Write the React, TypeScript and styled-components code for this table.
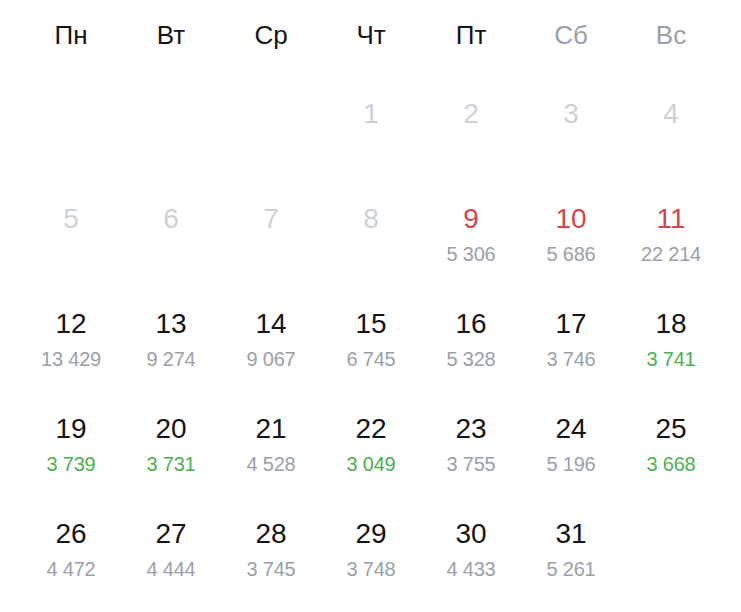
import React from 'react'
import styled, { createGlobalStyle } from 'styled-components'

const GlobalStyle = createGlobalStyle`
    html, body {
        margin: 0;
        padding: 0;
        background: #ffffff;
        font-family: 'Liberation Sans', Arial, sans-serif;
    }
`

type Tone = 'default' | 'muted' | 'holiday'
type PriceTone = 'regular' | 'cheap'

interface Day {
    day: number
    tone: Tone
    price?: string
    priceTone?: PriceTone
}

const weekdays = [
    { label: 'Пн', weekend: false },
    { label: 'Вт', weekend: false },
    { label: 'Ср', weekend: false },
    { label: 'Чт', weekend: false },
    { label: 'Пт', weekend: false },
    { label: 'Сб', weekend: true },
    { label: 'Вс', weekend: true },
]

const days: (Day | null)[] = [
    null, null, null,
    { day: 1, tone: 'muted' },
    { day: 2, tone: 'muted' },
    { day: 3, tone: 'muted' },
    { day: 4, tone: 'muted' },
    { day: 5, tone: 'muted' },
    { day: 6, tone: 'muted' },
    { day: 7, tone: 'muted' },
    { day: 8, tone: 'muted' },
    { day: 9, tone: 'holiday', price: '5 306' },
    { day: 10, tone: 'holiday', price: '5 686' },
    { day: 11, tone: 'holiday', price: '22 214' },
    { day: 12, tone: 'default', price: '13 429' },
    { day: 13, tone: 'default', price: '9 274' },
    { day: 14, tone: 'default', price: '9 067' },
    { day: 15, tone: 'default', price: '6 745' },
    { day: 16, tone: 'default', price: '5 328' },
    { day: 17, tone: 'default', price: '3 746' },
    { day: 18, tone: 'default', price: '3 741', priceTone: 'cheap' },
    { day: 19, tone: 'default', price: '3 739', priceTone: 'cheap' },
    { day: 20, tone: 'default', price: '3 731', priceTone: 'cheap' },
    { day: 21, tone: 'default', price: '4 528' },
    { day: 22, tone: 'default', price: '3 049', priceTone: 'cheap' },
    { day: 23, tone: 'default', price: '3 755' },
    { day: 24, tone: 'default', price: '5 196' },
    { day: 25, tone: 'default', price: '3 668', priceTone: 'cheap' },
    { day: 26, tone: 'default', price: '4 472' },
    { day: 27, tone: 'default', price: '4 444' },
    { day: 28, tone: 'default', price: '3 745' },
    { day: 29, tone: 'default', price: '3 748' },
    { day: 30, tone: 'default', price: '4 433' },
    { day: 31, tone: 'default', price: '5 261' },
]

const dayColors: Record<Tone, string> = {
    default: '#141417',
    muted: '#ccd2da',
    holiday: '#d5434e',
}

const priceColors: Record<PriceTone, string> = {
    regular: '#9aa0a9',
    cheap: '#4caf52',
}

const Calendar = styled.div`
    display: grid;
    grid-template-columns: repeat(7, 1fr);
    padding: 0 20px 0 21px;
    width: 741px;
    box-sizing: border-box;
`

const WeekdayCell = styled.div<{ $weekend: boolean }>`
    height: 70px;
    line-height: 70px;
    text-align: center;
    font-size: 26px;
    color: ${(p) => (p.$weekend ? '#9aa0a9' : '#141417')};
`

const DayCell = styled.div`
    height: 105px;
    padding-top: 27px;
    box-sizing: border-box;
    display: flex;
    flex-direction: column;
    align-items: center;
`

const DayNumber = styled.div<{ $tone: Tone }>`
    font-size: 28px;
    line-height: 34px;
    color: ${(p) => dayColors[p.$tone]};
`

const Price = styled.div<{ $tone: PriceTone }>`
    margin-top: 8px;
    font-size: 20px;
    line-height: 20px;
    letter-spacing: -0.2px;
    color: ${(p) => priceColors[p.$tone]};
`

const App = () => {
    return (
        <>
            <GlobalStyle />
            <Calendar>
                {weekdays.map((w) => (
                    <WeekdayCell key={w.label} $weekend={w.weekend}>
                        {w.label}
                    </WeekdayCell>
                ))}
                {days.map((d, i) =>
                    d ? (
                        <DayCell key={i}>
                            <DayNumber $tone={d.tone}>{d.day}</DayNumber>
                            {d.price && (
                                <Price $tone={d.priceTone ?? 'regular'}>{d.price}</Price>
                            )}
                        </DayCell>
                    ) : (
                        <DayCell key={i} />
                    )
                )}
            </Calendar>
        </>
    )
}

export default App
